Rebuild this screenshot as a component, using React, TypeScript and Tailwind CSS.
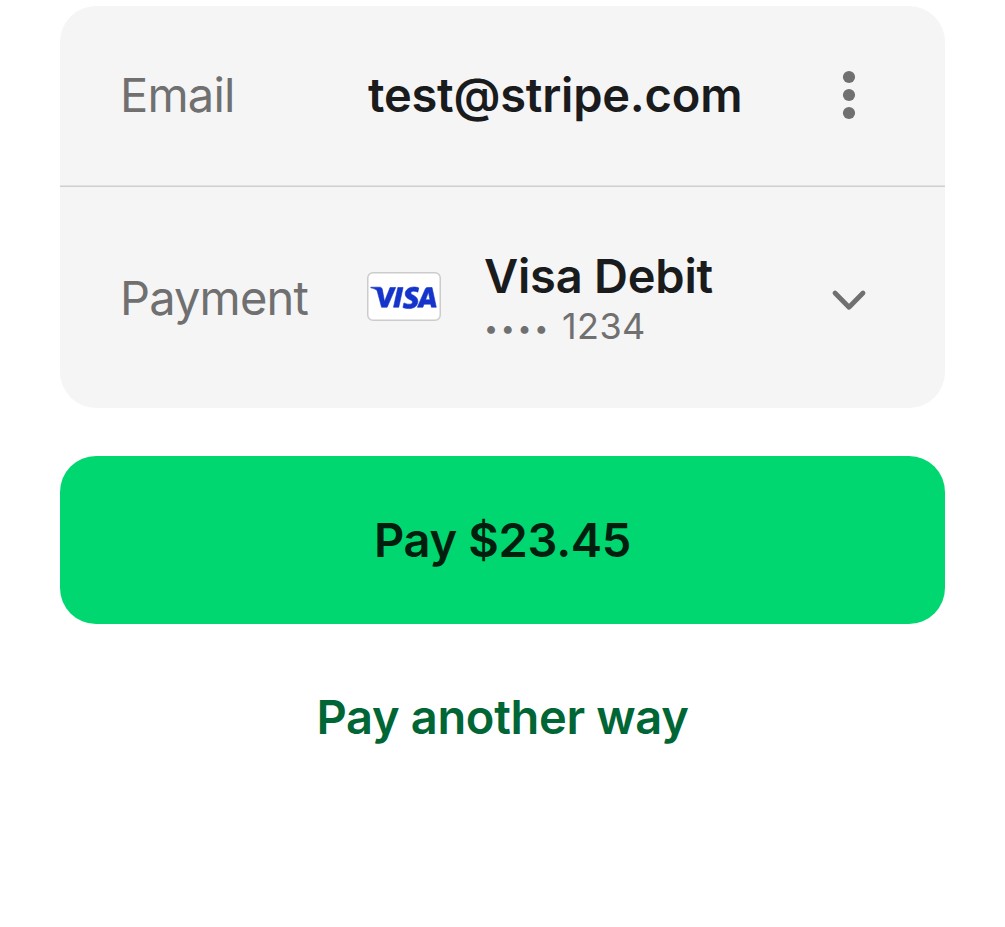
export default function App() {
  return (
    <main className="flex h-[927px] w-[1005px] flex-col bg-white px-[60px] pt-1.5 font-['Inter',sans-serif] text-[#1a1b1d]">
      <section className="flex h-[402px] shrink-0 flex-col rounded-[36px] bg-[#f5f5f5]">
        <div className="flex h-[181px] items-center border-b border-[#cfcfcf] pb-[3px] pl-[60px] shadow-[inset_0_-1px_0_#e2e2e2]">
          <span className="w-[248px] text-[47px] leading-[48px] tracking-[-0.8px] text-[#707070]">Email</span>
          <span className="flex-1 text-[47px] leading-[48px] font-semibold tracking-[-0.22px]">test@stripe.com</span>
          <button aria-label="Email options" className="mr-[80px] h-[52px] w-8">
            <svg viewBox="0 0 32 52" className="h-[52px] w-8 fill-[#707070]">
              <circle cx="16" cy="8" r="6.1" />
              <circle cx="16" cy="26" r="6.1" />
              <circle cx="16" cy="44" r="6.1" />
            </svg>
          </button>
        </div>
        <div className="flex h-[221px] items-center pl-[60px]">
          <span className="w-[247px] text-[47px] leading-[48px] tracking-[-0.85px] text-[#707070]">Payment</span>
          <svg viewBox="0 0 74 49" className="mb-0.5 h-[49px] w-[74px]">
            <rect x=".75" y=".75" width="72.5" height="47.5" rx="5.2" fill="white" stroke="#ccc" strokeWidth="1.5" />
            <path transform="translate(2.4 15.2) scale(.0607 .0625)" fill="#1434cb" stroke="#1434cb" strokeWidth="10" d="M433 5 292 321h-92L131 69c-4-16-8-22-20-29C90 28 54 17 22 10l2-10h148c19 0 36 13 40 34l37 195L340 5zM796 217c0-83-115-88-114-125 0-11 11-24 35-27 12-1 44-3 81 14l15-68C793 4 768-3 736-3c-85 0-145 45-146 110 0 48 43 75 75 91 34 16 45 27 45 41 0 23-27 32-52 33-44 1-69-12-89-21l-16 73c20 9 57 17 96 18 91 0 150-45 150-125M555 5 483 321h-86L469 5zM1022 321h80L1032 5h-74c-17 0-31 10-37 25L790 321h91l18-50h111zm-96-119 46-126 26 126z" />
          </svg>
          <div className="ml-[43px] flex-1">
            <div className="text-[47px] leading-[56px] font-semibold tracking-[-0.22px]">Visa Debit</div>
            <div className="flex h-[44px] items-center text-[36px] leading-[44px] tracking-[0.4px] text-[#707070]">
              <span className="mt-1 mr-[11px] text-[25px] tracking-[2.7px]">••••</span>
              <span>1234</span>
            </div>
          </div>
          <button aria-label="Show payment methods" className="mt-[5px] mr-[78px] h-9 w-9">
            <svg viewBox="0 0 36 36" className="h-9 w-9" fill="none" stroke="#707070" strokeWidth="4.8" strokeLinecap="round" strokeLinejoin="round">
              <path d="m4 11 14 14.3L32 11" />
            </svg>
          </button>
        </div>
      </section>
      <button className="mt-12 h-[168px] shrink-0 rounded-[36px] bg-[#00d770] text-[47px] font-semibold tracking-[-0.3px] text-[#011e0f]">Pay $23.45</button>
      <button className="mt-[57px] text-[47px] leading-[72px] font-semibold tracking-[-0.32px] text-[#006635]">Pay another way</button>
    </main>
  );
}
